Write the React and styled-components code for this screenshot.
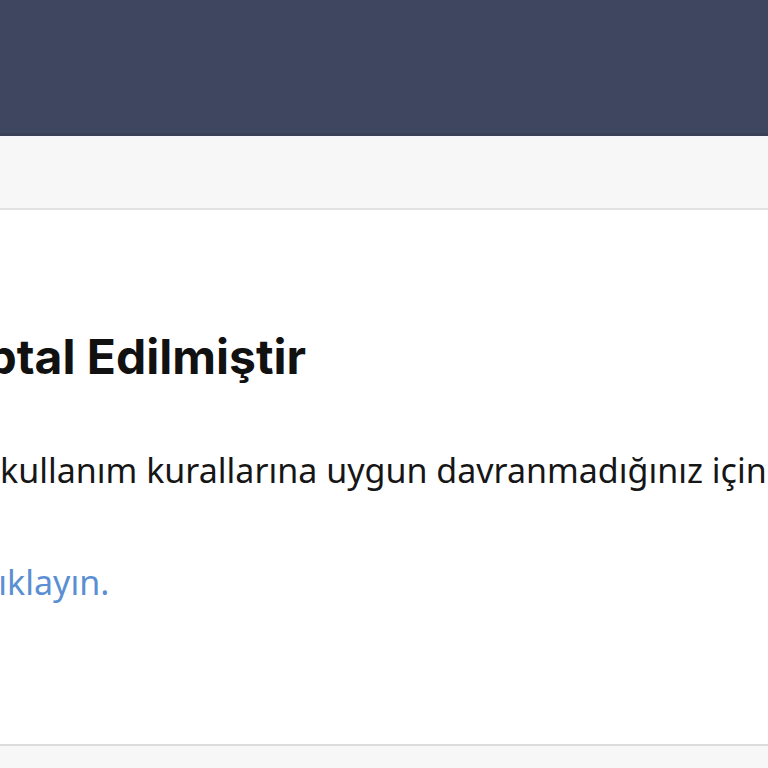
import React from "react";
import styled, { createGlobalStyle } from "styled-components";

const Global = createGlobalStyle`
  html, body {
    margin: 0;
    padding: 0;
    background: #f7f7f7;
    overflow: hidden;
  }
  #root {
    min-height: 768px;
  }
`;

const Page = styled.div`
  display: flex;
  flex-direction: column;
  min-height: 768px;
  background: #f7f7f7;
`;

const TopBar = styled.header`
  height: 133px;
  background: #3f4760;
  border-bottom: 3px solid #394058;
`;

const SubBar = styled.div`
  height: 70px;
  background: #f7f7f7;
  border-top: 2px solid #f4f6fc;
  border-bottom: 2px solid #e2e2e2;
`;

const Card = styled.main`
  background: #ffffff;
  height: 536px;
  padding-top: 118px;
  box-sizing: border-box;
  border-bottom: 2px solid #dcdcdc;
  overflow: hidden;
`;

const Line = styled.div`
  white-space: nowrap;
  margin-left: ${(p) => p.$shift}px;
`;

const Title = styled(Line)`
  font-family: Inter, "Liberation Sans", sans-serif;
  font-weight: 700;
  font-size: 48px;
  line-height: 58px;
  color: #111111;
`;

const Message = styled(Line)`
  font-family: "Noto Sans", "Open Sans", sans-serif;
  font-size: 34px;
  line-height: 51px;
  color: #161616;
  margin-top: 59px;
`;

const LinkLine = styled(Line)`
  font-family: "Noto Sans", "Open Sans", sans-serif;
  font-size: 34px;
  line-height: 51px;
  margin-top: 61px;
`;

const TextLink = styled.a`
  color: #5b8fd3;
  text-decoration: none;
`;

export default function App() {
  return (
    <Page>
      <Global />
      <TopBar />
      <SubBar />
      <Card>
        <Title $shift={-27}>İptal Edilmiştir</Title>
        <Message $shift={0}>kullanım kurallarına uygun davranmadığınız için</Message>
        <LinkLine $shift={-14}>
          <TextLink href="#">tıklayın.</TextLink>
        </LinkLine>
      </Card>
    </Page>
  );
}
